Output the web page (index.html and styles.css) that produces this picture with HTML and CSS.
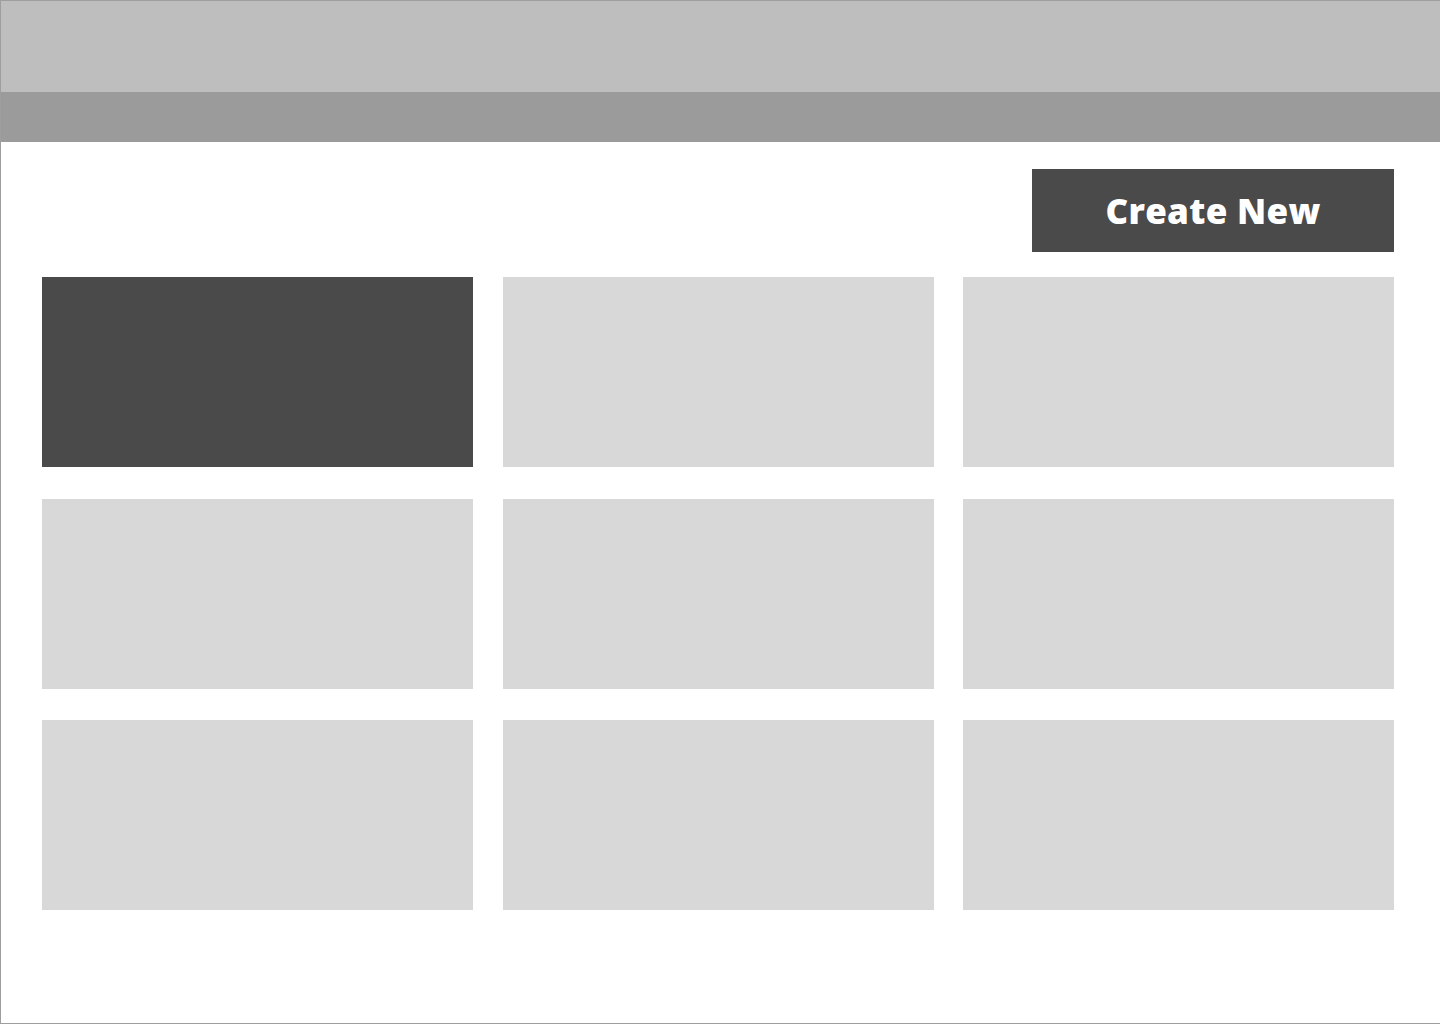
FILE: index.html
```html
<!DOCTYPE html>
<html lang="en">
<head>
  <meta charset="UTF-8">
  <meta name="viewport" content="width=device-width, initial-scale=1">
  <title>Dashboard</title>
  <link rel="stylesheet" href="styles.css">
</head>
<body>

<div class="page">
  <header class="topbar"></header>
  <nav class="navbar"></nav>

  <main class="content">
    <div class="actions">
      <button class="btn-create">Create New</button>
    </div>

    <div class="grid">
      <div class="tile active"></div>
      <div class="tile"></div>
      <div class="tile"></div>
      <div class="tile"></div>
      <div class="tile"></div>
      <div class="tile"></div>
      <div class="tile"></div>
      <div class="tile"></div>
      <div class="tile"></div>
    </div>
  </main>
</div>

</body>
</html>
```

FILE: styles.css
```css
* { box-sizing: border-box; }
body { margin: 0; font-family: "Open Sans", Arial, sans-serif; background: #fff; }
.page {
  width: 1440px;
  height: 1024px;
  border: 1px solid #9e9e9e;
  border-right: none;
  overflow: hidden;
}
.topbar { height: 91px; background: #bebebe; }
.navbar { height: 50px; background: #9b9b9b; }
.content { padding: 27px 46px 0 41px; }
.actions { display: flex; justify-content: flex-end; margin-bottom: 25px; }
.btn-create {
  width: 362px;
  height: 83px;
  background: #4a4a4a;
  color: #fff;
  border: none;
  font-family: "Open Sans", Arial, sans-serif;
  font-weight: 800;
  font-size: 35px;
  letter-spacing: 0.3px;
  cursor: pointer;
}
.grid {
  display: grid;
  grid-template-columns: repeat(3, 1fr);
  grid-auto-rows: 190px;
  column-gap: 29.5px;
  row-gap: 31.5px;
}
.tile { background: #d8d8d8; }
.tile.active { background: #4a4a4a; }
```
